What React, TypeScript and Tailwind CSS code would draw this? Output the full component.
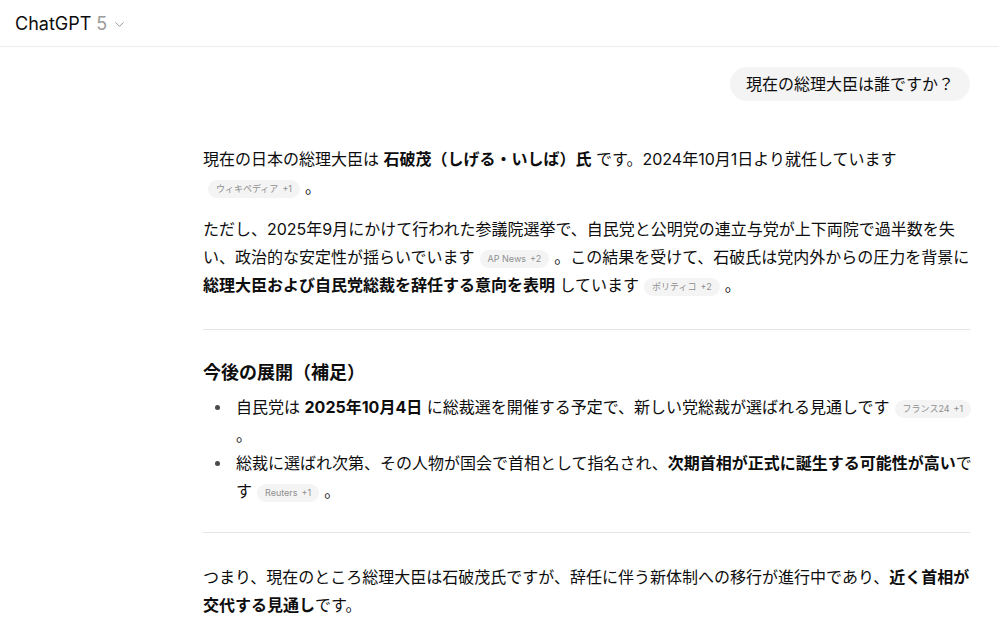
import { ChevronDown } from "lucide-react";

const font = {
  fontFamily: 'Inter, "Noto Sans CJK JP", sans-serif',
};

function Chip({ label, more, className = "mx-[5px]" }: { label: string; more: string; className?: string }) {
  return (
    <span
      className={`${className} inline-flex h-[18px] items-center gap-[4px] rounded-full bg-[#f4f4f4] px-[8px] align-[1px] text-[9px] leading-none text-[#8f8f8f]`}
    >
      <span>{label}</span>
      <span>{more}</span>
    </span>
  );
}

function Bullet({ children }: { children: React.ReactNode }) {
  return (
    <li className="flex">
      <span className="flex h-[28px] w-[33px] shrink-0 items-center">
        <span className="ml-[12px] h-[5px] w-[5px] rounded-full bg-[#4a4a4a]" />
      </span>
      <div className="min-w-0 flex-1">{children}</div>
    </li>
  );
}

export default function App() {
  return (
    <div className="min-h-[627px] w-[999px] bg-white text-[#0d0d0d]" style={font}>
      {/* header */}
      <div className="flex h-[47px] items-center border-b border-[#ececec] px-[15px]">
        <span className="text-[18px] text-[#0d0d0d]">ChatGPT</span>
        <span className="ml-[5px] text-[18px] text-[#9b9b9b]">5</span>
        <ChevronDown className="ml-[5px] mt-[2px] h-[15px] w-[15px] text-[#9b9b9b]" strokeWidth={1.6} />
      </div>

      <div className="ml-[203px] w-[767px]">
        {/* user bubble */}
        <div className="mt-[20px] flex justify-end">
          <div className="rounded-full bg-[#f4f4f4] px-[16px] py-[6px] text-[16px] leading-[22px] text-[#0d0d0d]">
            現在の総理大臣は誰ですか？
          </div>
        </div>

        {/* answer */}
        <div className="mt-[44px] text-[16px] leading-[28px] text-[#0d0d0d]">
          <p>
            現在の日本の総理大臣は <b className="font-bold">石破茂（しげる・いしば）氏</b> です。2024年10月1日より就任しています
            <br />
            <Chip label="ウィキペディア" more="+1" />。
          </p>

          <p className="mt-[14px]">
            ただし、2025年9月にかけて行われた参議院選挙で、自民党と公明党の連立与党が上下両院で過半数を失い、政治的な安定性が揺らいでいます
            <Chip label="AP News" more="+2" />。この結果を受けて、石破氏は党内外からの圧力を背景に
            <b className="font-bold">総理大臣および自民党総裁を辞任する意向を表明</b> しています
            <Chip label="ポリティコ" more="+2" />。
          </p>

          <hr className="mb-[29px] mt-[30px] border-t border-[#e5e5e5]" />

          <h3 className="text-[18px] font-bold leading-[28px]">今後の展開（補足）</h3>
          <ul className="mr-[-8px] mt-[6px]">
            <Bullet>
              自民党は <b className="font-bold">2025年10月4日</b> に総裁選を開催する予定で、新しい党総裁が選ばれる見通しです
              <Chip label="フランス24" more="+1" className="ml-[5px]" />
              <br />。
            </Bullet>
            <Bullet>
              総裁に選ばれ次第、その人物が国会で首相として指名され、<b className="font-bold">次期首相が正式に誕生する可能性が高い</b>で
              <br />す
              <Chip label="Reuters" more="+1" />。
            </Bullet>
          </ul>

          <hr className="my-[27px] border-t border-[#e5e5e5]" />

          <p className="mt-[30px]">
            つまり、現在のところ総理大臣は石破茂氏ですが、辞任に伴う新体制への移行が進行中であり、
            <b className="font-bold">近く首相が交代する見通し</b>です。
          </p>
        </div>
      </div>
    </div>
  );
}
